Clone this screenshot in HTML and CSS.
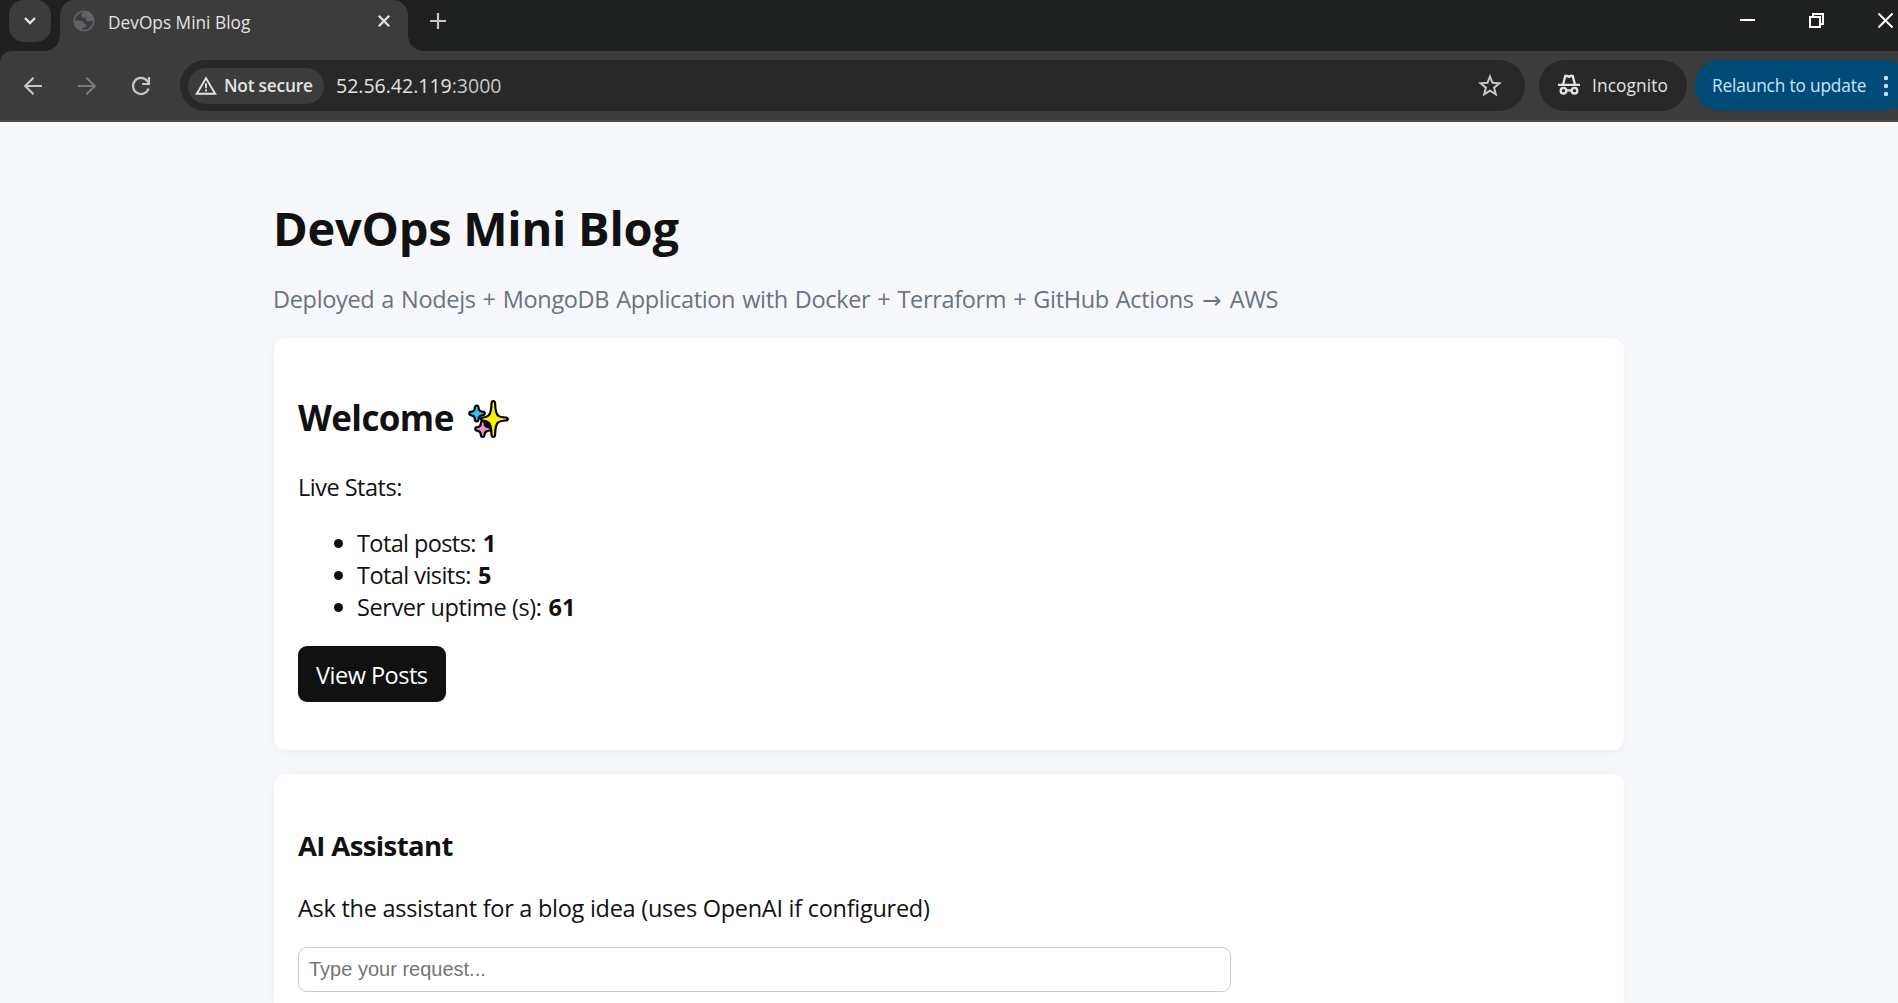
FILE: index.html
```html
<!DOCTYPE html>
<html lang="en">
<head>
<meta charset="utf-8">
<title>DevOps Mini Blog</title>
<link rel="stylesheet" href="styles.css">
</head>
<body>
<header class="browser">
  <div class="tabstrip">
    <button class="tab-search" aria-label="Search tabs">
      <svg width="14" height="10" viewBox="0 0 14 10"><path d="M2 2l5 5 5-5" fill="none" stroke="#e3e3e3" stroke-width="2.4"/></svg>
    </button>
    <div class="tab">
      <svg class="globe" width="22" height="22" viewBox="0 0 22 22"><circle cx="11" cy="11" r="9.7" fill="none" stroke="#5f6368" stroke-width="1.8"/><path d="M12 1.8C9 3 7.800 4.500 8.500 6.500c.6 1.300 2.300.8 3.500 1.300 1.500.8.5 2.600 2.200 3.200 1.800.6 4.200-.6 6.300 0C21 5.500 17 1.500 12 1.800zM1.300 11c2.500-.7 6-.5 8.200.3 1.500.6 1 2.300 2.500 2.700 1.300.4 1.600 1.500.8 2.500-1 1.300-2.300.8-3.300 1.700-.6.600-.4 1.600-.5 2.500C4.500 19.500 1.300 16 1.300 11z" fill="#5f6368"/></svg>
      <span class="tab-title">DevOps Mini Blog</span>
      <svg class="tab-close" width="14" height="14" viewBox="0 0 14 14"><path d="M1.800 1.800l10.400 10.400M12.200 1.800L1.800 12.200" stroke="#e3e3e3" stroke-width="2.200"/></svg>
    </div>
    <svg class="new-tab" width="16" height="16" viewBox="0 0 16 16"><path d="M8 0v16M0 8h16" stroke="#c7c7c7" stroke-width="2.200"/></svg>
    <div class="window-controls">
      <svg width="15" height="15" viewBox="0 0 15 15"><path d="M0 7h15" stroke="#fff" stroke-width="2"/></svg>
      <svg width="15" height="15" viewBox="0 0 15 15"><path d="M1 4h10v10H1zM4 4V1h10v10h-3" fill="none" stroke="#fff" stroke-width="2"/></svg>
      <svg width="15" height="15" viewBox="0 0 15 15"><path d="M.5.500l14 14M14.500.500l-14 14" stroke="#fff" stroke-width="2"/></svg>
    </div>
  </div>
  <div class="toolbar">
    <nav class="nav-icons">
      <svg width="20" height="20" viewBox="0 0 20 20"><path d="M19 10H2.500M10.500 1.700L2.200 10l8.300 8.300" fill="none" stroke="#c7c7c7" stroke-width="2.100"/></svg>
      <svg width="20" height="20" viewBox="0 0 20 20"><path d="M1 10h16.500M9.500 1.700l8.300 8.300-8.300 8.300" fill="none" stroke="#7c7c7c" stroke-width="2.100"/></svg>
      <svg width="20" height="20" viewBox="0 0 20 20"><path d="M17.600 12.500A8 8 0 1 1 16.300 5L18 7.500M18 1v7h-7" fill="none" stroke="#c7c7c7" stroke-width="2.200"/></svg>
    </nav>
    <div class="omnibox">
      <div class="security">
        <svg width="22" height="19" viewBox="0 0 22 19"><path d="M11 2.200L20.200 17.800H1.800z" fill="none" stroke="#e3e3e3" stroke-width="1.900"/><path d="M11 7.300v5M11 13.500v2" stroke="#e3e3e3" stroke-width="1.900"/></svg>
        <span class="security-text">Not secure</span>
      </div>
      <span class="url">52.56.42.119<span class="port">:3000</span></span>
      <svg class="star" width="24" height="23" viewBox="0 0 24 23"><path d="M12 2.500l2.500 6.300 6.900.5-5.300 4.400 1.700 6.700-5.800-3.700-5.800 3.700 1.700-6.700L2.600 9.300l6.900-.5z" fill="none" stroke="#c7c7c7" stroke-width="2"/></svg>
    </div>
    <div class="incognito">
      <svg width="22" height="21" viewBox="0 0 22 21"><g fill="none" stroke="#e3e3e3" stroke-width="2.300"><path d="M0 10.800h22M5.200 10L7.300 2h2.200l1.500.9 1.500-.9h2.200L16.800 10"/><circle cx="5.500" cy="16.700" r="2.800"/><circle cx="16.500" cy="16.700" r="2.800"/><path d="M8.300 16.300h5.400"/></g></svg>
      <span class="pill-text">Incognito</span>
    </div>
    <div class="relaunch">
      <span class="relaunch-text">Relaunch to update</span>
      <svg width="6" height="22" viewBox="0 0 6 22" fill="#c2e7ff"><circle cx="3" cy="3" r="2.200"/><circle cx="3" cy="11" r="2.200"/><circle cx="3" cy="19" r="2.200"/></svg>
    </div>
  </div>
</header>
<main class="page">
  <h1 class="title">DevOps Mini Blog</h1>
  <p class="subtitle">Deployed a Nodejs + MongoDB Application with Docker + Terraform + GitHub Actions<span class="arrow"> → </span>AWS</p>
  <section class="card welcome">
    <h2 class="welcome-title"><span>Welcome</span>
      <svg width="42" height="40" viewBox="0 0 42 40" stroke="#000" stroke-width="2.200" stroke-linejoin="round"><path d="M18 21l6 2v9l-5-3z" fill="#000"/><path d="M8.700 6.500q1.700 0 1.900 2.500.2 3.400 3.600 3.700 2.600.2 2.600 1.800t-2.600 1.800q-3.400.3-3.600 3.700-.2 2.500-1.900 2.500t-1.900-2.500q-.2-3.400-3.300-3.700-2.200-.2-2.200-1.800t2.200-1.800q3.100-.3 3.300-3.700.2-2.500 1.900-2.500z" fill="#29c5f6"/><path d="M14.700 22q1.700 0 1.900 2.500.2 3.400 3.600 3.700 2.600.2 2.600 1.800t-2.600 1.800q-3.400.3-3.600 3.700-.2 2.500-1.900 2.500t-1.900-2.500q-.2-3.400-3.300-3.700-2.200-.2-2.200-1.800t2.200-1.800q3.100-.3 3.300-3.700.2-2.500 1.900-2.500z" fill="#f58fc4"/><path d="M25.300 2q1.700 0 1.800 2.500.3 10 3 12 2 1.700 7.500 2 2.200.1 2.200 1.500t-2.200 1.500q-5.500.3-7.500 2-2.700 2-3 12-.1 2.500-1.800 2.500t-1.800-2.500q-.3-10-3-12-2-1.700-5.300-2-2.200-.1-2.200-1.500t2.200-1.500q3.300-.3 5.300-2 2.700-2 3-12 .1-2.500 1.800-2.500z" fill="#fff000"/></svg>
    </h2>
    <p class="stats-label">Live Stats:</p>
    <ul class="stats">
      <li><span class="posts">Total posts:</span><b>1</b></li>
      <li><span class="visits">Total visits:</span><b>5</b></li>
      <li><span class="uptime">Server uptime (s):</span><b>61</b></li>
    </ul>
    <a class="button">View Posts</a>
  </section>
  <section class="card assistant">
    <h3 class="assistant-title">AI Assistant</h3>
    <p class="assistant-text">Ask the assistant for a blog idea (uses OpenAI if configured)</p>
    <input class="prompt" type="text" placeholder="Type your request...">
  </section>
</main>
</body>
</html>
```
FILE: styles.css
```css
* { box-sizing: border-box; }
body {
  margin: 0;
  background: #f7f8fc;
  color: #111;
  font: 23.5px/32px "Open Sans", "Noto Sans", sans-serif;
}
svg { display: block; flex: none; }
h1, h2, h3, p, ul { margin: 0; padding: 0; }

/* Browser chrome */
.browser { background: #1f2120; font-size: 17.3px; line-height: 24px; color: #e3e3e3; white-space: nowrap; }
.tabstrip { display: flex; height: 51px; }
.tab-search {
  display: flex; align-items: center; justify-content: center;
  width: 42px; height: 42px; margin: 0 9px; padding: 0;
  border: 0; border-radius: 15px; background: #3c3c3c;
}
.tab {
  position: relative;
  display: flex; align-items: center;
  width: 348px; height: 51px; padding: 0 17px 9px 13px;
  border-radius: 15px 15px 0 0; background: #3c3c3c;
}
.tab::before, .tab::after {
  content: ""; position: absolute; bottom: 0; width: 15px; height: 15px;
}
.tab::before { left: -15px; background: radial-gradient(circle at 0 0, transparent 14.500px, #3c3c3c 15px); }
.tab::after { right: -15px; background: radial-gradient(circle at 100% 0, transparent 14.500px, #3c3c3c 15px); }
.tab-title { margin: 3px 0 0 13px; }
.tab-close { margin-left: auto; }
.new-tab { margin: 13px 0 0 22px; }
.window-controls { display: flex; gap: 54px; margin: 13px 5px 0 auto; }
.toolbar {
  display: flex; align-items: flex-start;
  height: 71px; padding-top: 9px; overflow: hidden;
  border-bottom: 2px solid #4a4a4a; border-top-left-radius: 12px;
  background: #3c3c3c;
}
.nav-icons { display: flex; flex: none; gap: 34px; width: 180px; padding: 16px 0 0 23px; }
.omnibox {
  display: flex; flex: none; align-items: center;
  width: 1345px; height: 51px; padding: 0 23px 0 8px;
  border-radius: 26px; background: #282828;
}
.security {
  display: flex; align-items: center; gap: 7px;
  width: 136px; height: 36px; padding-left: 7px;
  border-radius: 18px; background: #3c3c3c;
}
.security-text { font-weight: 600; letter-spacing: -.2px; }
.url { margin-left: 12px; font-size: 19.5px; }
.port { color: #c7c7c7; }
.star { margin-left: auto; }
.incognito {
  display: flex; flex: none; align-items: center; gap: 12px;
  width: 148px; height: 51px; margin: 0 8px 0 14px; padding-left: 19px;
  border-radius: 26px; background: #282828;
}
.incognito svg { margin-bottom: 2px; }
.pill-text { letter-spacing: .12px; }
.relaunch {
  display: flex; align-items: center; gap: 17px;
  flex: none; width: 214px; height: 51px; padding-left: 17px;
  border-radius: 26px; background: #004a77; color: #c2e7ff;
}
.relaunch-text { letter-spacing: -.16px; }

/* Page */
.page { width: 1350px; margin: 0 auto; padding-top: 74px; }
.title { margin-left: -1px; font-size: 47px; line-height: 64px; letter-spacing: -.25px; }
.subtitle { margin: 23px 0 23px -1px; color: #6b7280; letter-spacing: -.33px; word-spacing: 1.2px; white-space: nowrap; }
.arrow { display: inline-block; width: 36px; text-align: center; font-family: "DejaVu Sans", sans-serif; font-size: 23px; line-height: 20px; }
.card {
  padding: 0 24px; border-radius: 12px; background: #fff;
  box-shadow: 0 3px 18px rgba(0, 0, 0, .04);
}
.welcome { height: 412px; padding-top: 56px; }
.welcome-title {
  display: flex; align-items: center; gap: 14px;
  height: 48px; font-size: 35px; line-height: 48px; letter-spacing: -.6px;
}
.welcome-title svg { margin-bottom: -1px; }
.stats-label { margin-top: 29px; letter-spacing: -.5px; }
.stats { margin: 24px 0 23px; padding-left: 36px; list-style: none; }
.stats li { display: flex; align-items: center; }
.stats li::before { content: ""; width: 9px; height: 9px; margin-right: 14px; border-radius: 50%; background: #111; }
.stats b { margin-left: 7px; }
.posts { letter-spacing: -.6px; }
.visits { letter-spacing: -.55px; }
.uptime { letter-spacing: -.4px; }
.button {
  display: block; width: 148px; height: 56px; padding-left: 18px;
  border-radius: 9px; background: #111; color: #fff;
  line-height: 58px; letter-spacing: -.5px;
}
.assistant { height: 229px; margin-top: 24px; padding-top: 53px; border-radius: 12px 12px 0 0; }
.assistant-title { font-size: 27.5px; line-height: 38px; letter-spacing: -.62px; }
.assistant-text { margin: 27px 0 23px; letter-spacing: -.27px; }
.prompt {
  display: block; width: 933px; height: 45px; padding: 0 10px;
  border: 1px solid #ccc; border-radius: 9px; background: #fff;
  font: 20px "Liberation Sans", Arial, sans-serif;
}
.prompt::placeholder { color: #757575; }
```
